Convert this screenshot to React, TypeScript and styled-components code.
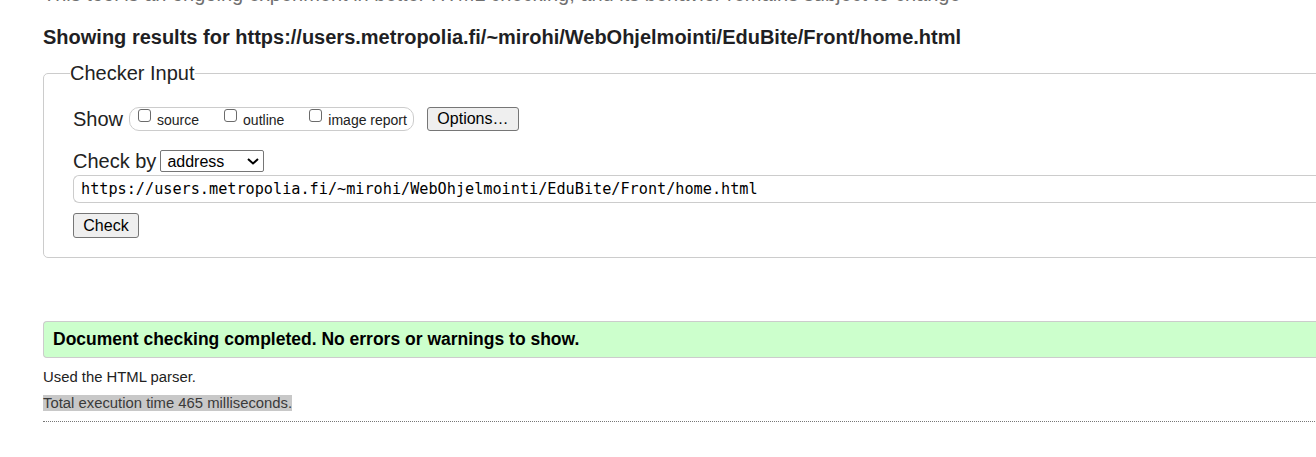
import React from "react";
import styled, { createGlobalStyle } from "styled-components";

const GlobalStyle = createGlobalStyle`
  html, body {
    margin: 0;
    padding: 0;
    background: #ffffff;
    overflow: hidden;
  }
  body {
    font-family: "Liberation Sans", Arial, sans-serif;
    color: #222222;
  }
`;

const Page = styled.div`
  display: flow-root;
  width: 1300px;
  padding-left: 43px;
`;

const Intro = styled.p`
  margin: -17px 0 0 0;
  font-size: 20px;
  line-height: 23px;
  color: #707070;
  white-space: nowrap;
`;

const Heading = styled.h2`
  margin: 20px 0 0 0;
  font-size: 20px;
  line-height: 23px;
  font-weight: bold;
  color: #1f1f24;
  white-space: nowrap;
`;

const Fieldset = styled.fieldset`
  margin: 13px 0 0 0;
  padding: 22px 0 19px 29px;
  border: 1px solid #cccccc;
  border-radius: 5px;
  min-width: 0;
`;

const Legend = styled.legend`
  margin-left: -3px;
  padding: 0;
  font-size: 20px;
  line-height: 23px;
  color: #222222;
`;

const Row = styled.div<{ $h: number; $mt?: number }>`
  display: flex;
  align-items: center;
  height: ${(p) => p.$h}px;
  margin-top: ${(p) => p.$mt ?? 0}px;
`;

const RowLabel = styled.span<{ $lh: number }>`
  font-size: 20px;
  line-height: ${(p) => p.$lh}px;
  color: #222222;
  white-space: nowrap;
`;

const Group = styled.div`
  display: flex;
  align-items: flex-start;
  box-sizing: border-box;
  height: 24px;
  margin-left: 6px;
  padding: 0 6px 0 8px;
  border: 1px solid #cccccc;
  border-radius: 10px;
  gap: 25px;
`;

const CheckItem = styled.label`
  display: flex;
  align-items: flex-start;
  white-space: nowrap;
`;

const Box = styled.input`
  appearance: none;
  box-sizing: border-box;
  width: 13px;
  height: 13px;
  margin: 1px 6px 0 0;
  border: 1px solid #6b6b6b;
  border-radius: 3px;
  background: #ffffff;
`;

const CheckText = styled.span`
  margin-top: 4px;
  font-size: 14px;
  line-height: 16px;
  color: #222222;
`;

const NativeButton = styled.button<{ $w: number; $h: number }>`
  box-sizing: border-box;
  width: ${(p) => p.$w}px;
  height: ${(p) => p.$h}px;
  padding: 0;
  font-family: "Liberation Sans", Arial, sans-serif;
  font-size: 16px;
  color: #000000;
  background: #efefef;
  border: 1px solid #767676;
  border-radius: 3px;
`;

const OptionsButton = styled(NativeButton)`
  margin-left: 13px;
`;

const SelectWrap = styled.div`
  position: relative;
  margin-left: 4px;
  width: 104px;
  height: 22px;
`;

const Select = styled.select`
  appearance: none;
  box-sizing: border-box;
  width: 100%;
  height: 100%;
  margin: 0;
  padding: 0 0 0 6px;
  font-family: "Liberation Sans", Arial, sans-serif;
  font-size: 16px;
  color: #000000;
  background: #ffffff;
  border: 1px solid #767676;
  border-radius: 2px;
`;

const Chevron = styled.svg`
  position: absolute;
  right: 5px;
  top: 8px;
  pointer-events: none;
`;

const UrlInput = styled.input`
  display: block;
  box-sizing: border-box;
  width: 100%;
  height: 28px;
  margin-top: 3px;
  padding: 0 0 0 7px;
  font-family: "DejaVu Sans Mono", monospace;
  font-size: 15.2px;
  color: #000000;
  background: #ffffff;
  border: 1px solid #cccccc;
  border-right: none;
  border-radius: 6px 0 0 6px;
  outline: none;
`;

const CheckButton = styled(NativeButton)`
  display: block;
  margin-top: 10px;
`;

const Success = styled.div`
  margin-top: 63px;
  padding: 7px 0 8px 9px;
  border: 1px solid #cccccc;
  border-right: none;
  border-radius: 4px 0 0 4px;
  background: #ccffcc;
  font-size: 17.5px;
  line-height: 20px;
  font-weight: bold;
  color: #000000;
  white-space: nowrap;
`;

const Note = styled.p`
  margin: 11px 0 0 0;
  font-size: 14.85px;
  line-height: 17px;
  color: #222222;
`;

const TimeLine = styled.p`
  margin: 9px 0 0 0;
  height: 16px;
  line-height: 16px;
`;

const Highlight = styled.span`
  display: inline-block;
  height: 16px;
  line-height: 16px;
  font-size: 14.85px;
  color: #3a3a3a;
  background: #c8c8c8;
`;

const Rule = styled.hr`
  margin: 10px 0 0 0;
  border: none;
  border-top: 1px dotted #777777;
  height: 0;
`;

export default function App() {
  const url =
    "https://users.metropolia.fi/~mirohi/WebOhjelmointi/EduBite/Front/home.html";
  return (
    <>
      <GlobalStyle />
      <Page>
        <Intro>
          This tool is an ongoing experiment in better HTML checking, and its
          behavior remains subject to change
        </Intro>
        <Heading>Showing results for {url}</Heading>
        <Fieldset>
          <Legend>Checker Input</Legend>
          <Row $h={24}>
            <RowLabel $lh={24}>Show</RowLabel>
            <Group>
              <CheckItem>
                <Box type="checkbox" />
                <CheckText>source</CheckText>
              </CheckItem>
              <CheckItem>
                <Box type="checkbox" />
                <CheckText>outline</CheckText>
              </CheckItem>
              <CheckItem>
                <Box type="checkbox" />
                <CheckText>image report</CheckText>
              </CheckItem>
            </Group>
            <OptionsButton $w={92} $h={24}>
              Options…
            </OptionsButton>
          </Row>
          <Row $h={22} $mt={19}>
            <RowLabel $lh={22}>Check by</RowLabel>
            <SelectWrap>
              <Select defaultValue="address">
                <option value="address">address</option>
                <option value="file">file upload</option>
                <option value="text">text input</option>
              </Select>
              <Chevron width="12" height="7" viewBox="0 0 12 7">
                <path
                  d="M1 1 L6 5.5 L11 1"
                  fill="none"
                  stroke="#000"
                  strokeWidth="2"
                />
              </Chevron>
            </SelectWrap>
          </Row>
          <UrlInput type="text" defaultValue={url} readOnly />
          <CheckButton $w={66} $h={25}>
            Check
          </CheckButton>
        </Fieldset>
        <Success>
          Document checking completed. No errors or warnings to show.
        </Success>
        <Note>Used the HTML parser.</Note>
        <TimeLine>
          <Highlight>Total execution time 465 milliseconds.</Highlight>
        </TimeLine>
        <Rule />
      </Page>
    </>
  );
}
